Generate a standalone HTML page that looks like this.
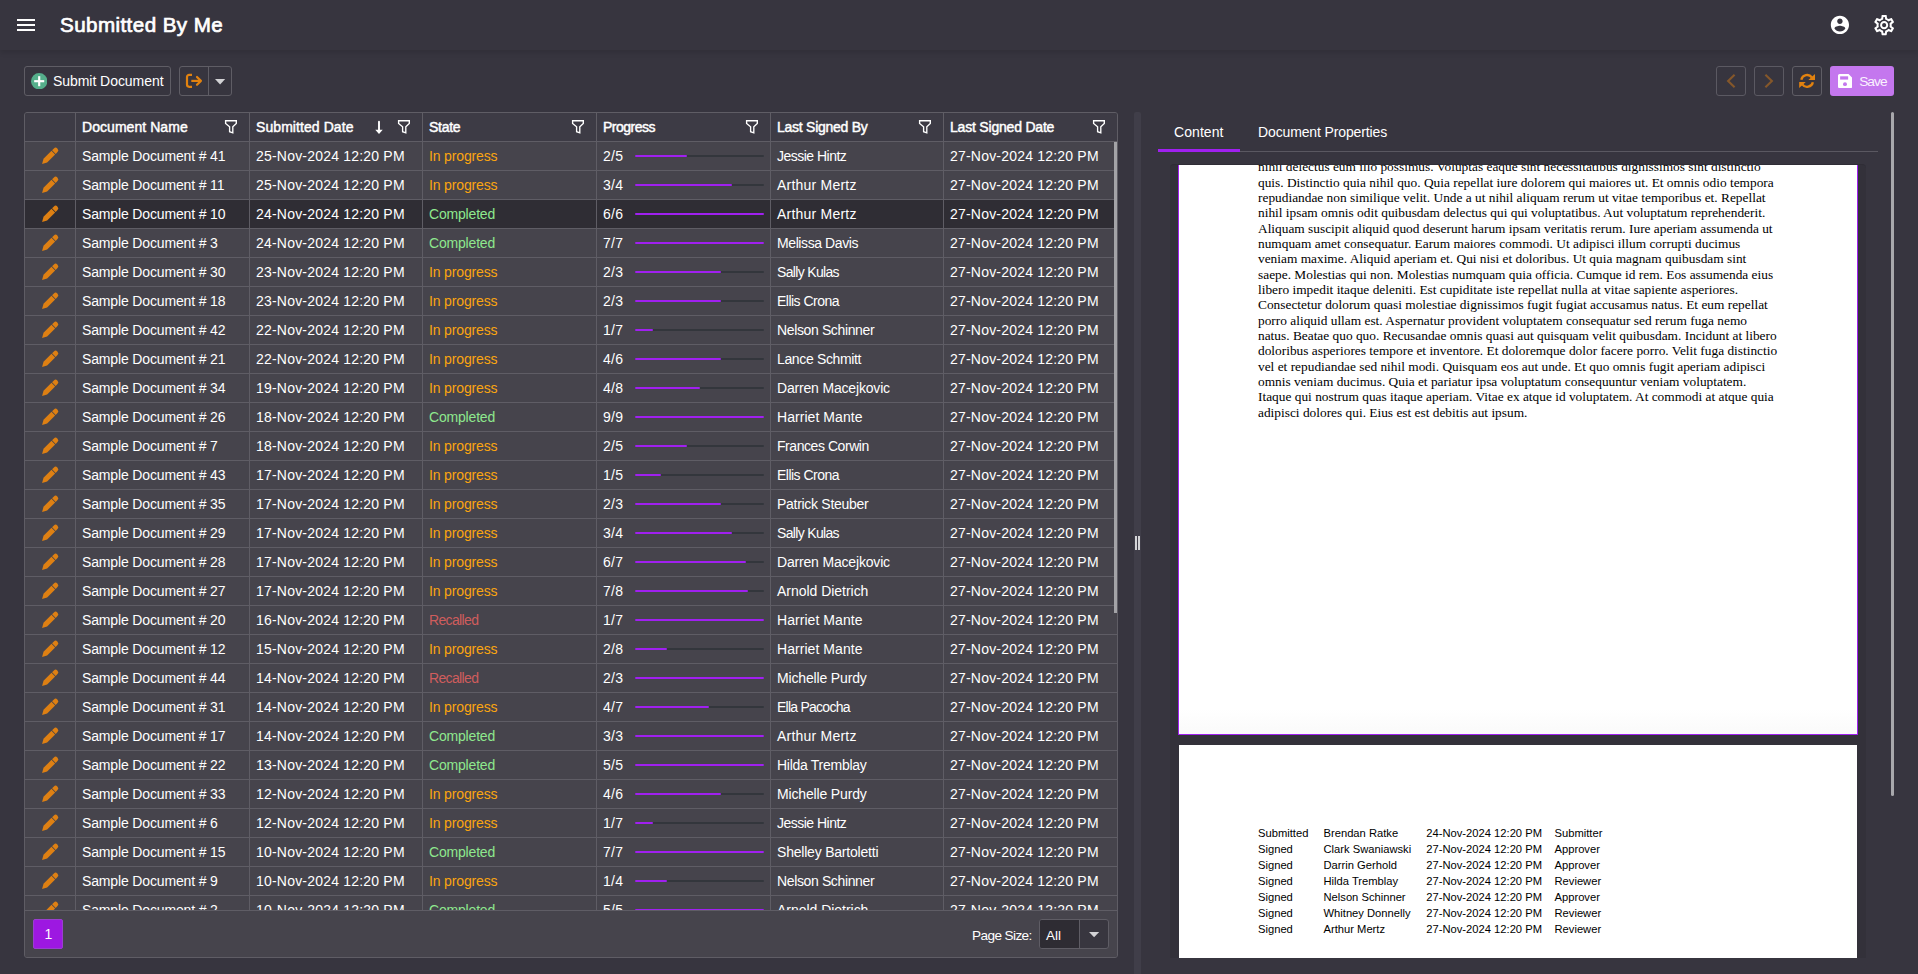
<!DOCTYPE html>
<html lang="en"><head><meta charset="utf-8"><title>Submitted By Me</title>
<style>
*{box-sizing:border-box;margin:0;padding:0}
html,body{width:1918px;height:974px;overflow:hidden;background:#37353f}
body{font-family:"Liberation Sans",sans-serif;font-size:14px;color:#fff;position:relative}
.abs{position:absolute}
#hdr{left:0;top:0;width:1918px;height:50px;background:#37353f;box-shadow:0 3px 5px rgba(0,0,0,.11)}
#title{left:60px;top:12px;font-size:20.6px;font-weight:normal;-webkit-text-stroke:.7px #fff;letter-spacing:.42px;line-height:26.6px;white-space:nowrap}
.btn{border:1px solid #5f5d65;border-radius:3px;height:30px;top:66px}
.btn.dis{border-color:#5b5962}
#grid{left:24px;top:112px;width:1094px;height:846px;border:1px solid #5f5d65;border-radius:3px 3px 3px 3px;background:#46444c;overflow:hidden}
#ghead{left:0;top:0;width:1092px;height:28px;background:#3d3b45}
#gbody{left:0;top:28px;width:1092px;height:769px;overflow:hidden}
.r{position:absolute;left:0;width:1092px;height:29px;border-top:1px solid #5f5d65}
.r.sel{background:#2f2d34}
.c{position:absolute;top:0;height:28px;line-height:29.2px;white-space:nowrap;padding-left:6px;border-left:1px solid #5f5d65;overflow:hidden}
.c0{left:0;width:50px;border-left:0}
.c1{left:50px;width:174px}
.c2{left:224px;width:173px}
.c3{left:397px;width:174px}
.c4{left:571px;width:174px}
.c5{left:745px;width:173px}
.c6{left:918px;width:174px}
.h{position:absolute;top:0;height:28px;line-height:29.2px;font-size:14px;font-weight:normal;-webkit-text-stroke:.45px #fff;white-space:nowrap;padding-left:6px;border-left:1px solid #5f5d65}
.h.c0{border-left:0}
.ip{color:#fba510;letter-spacing:-.15px}.cp{color:#8ee88e;letter-spacing:-.18px}.rc{color:#cf5d5d;letter-spacing:-.65px}
.pen{position:absolute;left:15px;top:4px}
.flt{position:absolute;right:10.6px;top:6px}
.srt{position:absolute;right:38.5px;top:6.5px}
.trk{position:absolute;left:38px;top:13px;width:129px;height:2px;border-radius:1px;background:#33363c}
.bar{position:absolute;left:0;top:0;height:2px;border-radius:1px;background:#a020f0}
.nm{letter-spacing:-.15px}.dt{letter-spacing:.2px}.who{letter-spacing:-.2px}.pg{letter-spacing:.3px}
#pager{left:0;top:797px;width:1092px;height:47px;border-top:1px solid #5f5d65;background:#46444c}
</style></head><body>

<div id="hdr" class="abs">
<svg class="abs" style="left:17px;top:19px" width="18" height="12" viewBox="0 0 18 12"><rect x="0" y="0" width="18" height="2" fill="#fff"/><rect x="0" y="5" width="18" height="2" fill="#fff"/><rect x="0" y="10" width="18" height="2" fill="#fff"/></svg>
<div id="title" class="abs">Submitted By Me</div>
<svg class="abs" style="left:1829.1px;top:14px" width="21.84" height="21.84" viewBox="0 0 24 24"><path fill="#fff" d="M12 2C6.48 2 2 6.48 2 12s4.48 10 10 10 10-4.48 10-10S17.52 2 12 2zm0 3c1.66 0 3 1.34 3 3s-1.34 3-3 3-3-1.34-3-3 1.34-3 3-3zm0 14.200000000000001c-2.5 0-4.71-1.28-6-3.22.03-1.99 4-3.08 6-3.08 1.99 0 5.970000000000001 1.09 6 3.08-1.29 1.94-3.5 3.22-6 3.22z"/></svg>
<svg class="abs" style="left:1871.7px;top:12.8px" width="24.3" height="24.3" viewBox="0 0 24 24"><path fill="#fff" d="M19.43 12.98c.04-.32.07-.64.07-.98 0-.34-.03-.66-.07-.98l2.11-1.65c.19-.15.24-.42.12-.64l-2-3.46c-.09-.16-.26-.25-.44-.25-.06 0-.12.01-.17.03l-2.49 1c-.52-.4-1.08-.73-1.69-.98l-.38-2.65C14.460000000000001 2.18 14.25 2 14 2h-4c-.25 0-.46.18-.49.42l-.38 2.65c-.61.25-1.17.59-1.69.98l-2.49-1c-.06-.02-.12-.03-.18-.03-.17 0-.34.09-.43.25l-2 3.46c-.13.22-.07.49.12.64l2.11 1.65c-.04.32-.07.65-.07.98 0 .33.03.66.07.98l-2.11 1.65c-.19.15-.24.42-.12.64l2 3.46c.09.16.26.25.44.25.06 0 .12-.01.17-.03l2.49-1c.52.4 1.08.73 1.69.98l.38 2.65c.03.24.24.42.49.42h4c.25 0 .46-.18.49-.42l.38-2.65c.61-.25 1.17-.59 1.69-.98l2.49 1c.06.02.12.03.18.03.17 0 .34-.09.43-.25l2-3.46c.12-.22.07-.49-.12-.64l-2.11-1.65zm-1.98-1.71c.04.31.05.52.05.73 0 .21-.02.43-.05.73l-.14 1.13.89.7 1.08.84-.7 1.21-1.27-.51-1.04-.42-.9.68c-.43.32-.84.56-1.25.73l-1.06.43-.16 1.13-.2 1.35h-1.4l-.19-1.35-.16-1.13-1.06-.43c-.43-.18-.83-.41-1.23-.71l-.91-.7-1.06.43-1.27.51-.7-1.21 1.08-.84.89-.7-.14-1.13c-.03-.31-.05-.54-.05-.74s.02-.43.05-.73l.14-1.13-.89-.7-1.08-.84.7-1.21 1.27.51 1.04.42.9-.68c.43-.32.84-.56 1.25-.73l1.06-.43.16-1.13.2-1.35h1.39l.19 1.35.16 1.13 1.06.43c.43.18.83.41 1.23.71l.91.7 1.06-.43 1.27-.51.7 1.21-1.07.85-.89.7.14 1.13zM12 8c-2.21 0-4 1.79-4 4s1.79 4 4 4 4-1.79 4-4-1.79-4-4-4zm0 6c-1.1 0-2-.9-2-2s.9-2 2-2 2 .9 2 2-.9 2-2 2z"/></svg>
</div>
<div class="abs btn" style="left:24px;width:147px"><svg class="abs" style="left:6px;top:6px" width="16.4" height="16.4" viewBox="0 0 16 16"><circle cx="8" cy="8" r="8" fill="#55ae8b"/><rect x="3.1" y="6.95" width="9.8" height="2.1" fill="#fff"/><rect x="6.95" y="3.1" width="2.1" height="9.8" fill="#fff"/></svg><span class="abs" style="left:28px;top:0;line-height:28px;white-space:nowrap;letter-spacing:-.05px">Submit Document</span></div>
<div class="abs btn" style="left:179px;width:53px"><div class="abs" style="left:28px;top:0;width:1px;height:28px;background:#5f5d65"></div><svg class="abs" style="left:5px;top:6px" width="20" height="16" viewBox="0 0 20 16"><path d="M7 1.8 H4.2 A2.2 2.2 0 0 0 2 4 V11.6 A2.2 2.2 0 0 0 4.2 13.8 H7" fill="none" stroke="#e2820f" stroke-width="2.2"/><path d="M6.3 7.9 H15.5" fill="none" stroke="#e2820f" stroke-width="2.2"/><path d="M12 4 L15.9 7.9 L12 11.8" fill="none" stroke="#e2820f" stroke-width="2.2" stroke-linecap="round" stroke-linejoin="round"/></svg><svg class="abs" style="left:34.8px;top:11.8px" width="11" height="6" viewBox="0 0 11 6"><path d="M0 0 H10.2 L5.1 5.4 Z" fill="#d2d2d5"/></svg></div>
<div class="abs btn dis" style="left:1716px;width:30px"><svg class="abs" style="left:8px;top:6px" width="12" height="16" viewBox="0 0 12 16"><path d="M9.6 1.7 L3.1 8 L9.6 14.3" fill="none" stroke="#85572a" stroke-width="2.1"/></svg></div>
<div class="abs btn dis" style="left:1754px;width:30px"><svg class="abs" style="left:8px;top:6px" width="12" height="16" viewBox="0 0 12 16"><path d="M2.4 1.7 L8.9 8 L2.4 14.3" fill="none" stroke="#85572a" stroke-width="2.1"/></svg></div>
<div class="abs btn" style="left:1792px;width:30px"><svg class="abs" style="left:5px;top:5px" width="18" height="18" viewBox="0 0 18 18"><g fill="none" stroke="#e2820f" stroke-width="2.35"><path d="M3.29 7.7 A5.95 5.95 0 0 1 13.9 5.5"/><path d="M14.87 10.2 A5.95 5.95 0 0 1 4.26 12.4"/></g><path d="M17 1.9 V7.9 H10.4 Z" fill="#e2820f"/><path d="M1.16 16 V10 H7.76 Z" fill="#e2820f"/></svg></div>
<div class="abs" style="left:1830px;top:66px;width:64px;height:30px;border-radius:3px;background:#c477ee"><svg class="abs" style="left:8px;top:8px" width="14.2" height="14.2" viewBox="0 0 14 14"><path d="M1.6 0 H10.4 L14 3.6 V12.4 A1.6 1.6 0 0 1 12.4 14 H1.6 A1.6 1.6 0 0 1 0 12.4 V1.6 A1.6 1.6 0 0 1 1.6 0 Z" fill="#fff"/><rect x="2.1" y="2.3" width="7.9" height="3.2" fill="#c477ee"/><circle cx="6.9" cy="10" r="1.95" fill="#c477ee"/></svg><span class="abs" style="left:29.2px;top:0;line-height:32.6px;font-size:13.7px;letter-spacing:-.95px;white-space:nowrap;color:#faf2fe">Save</span></div>
<div id="grid" class="abs">
<div id="ghead" class="abs">
<div class="h c c0"></div>
<div class="h c c1" style="letter-spacing:0.052px">Document Name<svg class="flt" width="14" height="16" viewBox="0 0 14 16"><path d="M1.6 1.7 H12.3 V4.4 L8.8 7.8 V13.9 L5.6 12.7 V7.8 L1.6 4.4 Z" fill="none" stroke="#fff" stroke-width="1.35" stroke-linejoin="miter"/></svg></div>
<div class="h c c2" style="letter-spacing:0.074px">Submitted Date<svg class="srt" width="10" height="16" viewBox="0 0 10 16"><path d="M5 1.8 V11" stroke="#fff" stroke-width="1.9" stroke-linecap="round" fill="none"/><path d="M1.3 9.7 H8.7 L5 14 Z" fill="#fff"/></svg><svg class="flt" width="14" height="16" viewBox="0 0 14 16"><path d="M1.6 1.7 H12.3 V4.4 L8.8 7.8 V13.9 L5.6 12.7 V7.8 L1.6 4.4 Z" fill="none" stroke="#fff" stroke-width="1.35" stroke-linejoin="miter"/></svg></div>
<div class="h c c3" style="letter-spacing:-0.29px">State<svg class="flt" width="14" height="16" viewBox="0 0 14 16"><path d="M1.6 1.7 H12.3 V4.4 L8.8 7.8 V13.9 L5.6 12.7 V7.8 L1.6 4.4 Z" fill="none" stroke="#fff" stroke-width="1.35" stroke-linejoin="miter"/></svg></div>
<div class="h c c4" style="letter-spacing:-0.498px">Progress<svg class="flt" width="14" height="16" viewBox="0 0 14 16"><path d="M1.6 1.7 H12.3 V4.4 L8.8 7.8 V13.9 L5.6 12.7 V7.8 L1.6 4.4 Z" fill="none" stroke="#fff" stroke-width="1.35" stroke-linejoin="miter"/></svg></div>
<div class="h c c5" style="letter-spacing:-0.257px">Last Signed By<svg class="flt" width="14" height="16" viewBox="0 0 14 16"><path d="M1.6 1.7 H12.3 V4.4 L8.8 7.8 V13.9 L5.6 12.7 V7.8 L1.6 4.4 Z" fill="none" stroke="#fff" stroke-width="1.35" stroke-linejoin="miter"/></svg></div>
<div class="h c c6" style="letter-spacing:-0.2px">Last Signed Date<svg class="flt" width="14" height="16" viewBox="0 0 14 16"><path d="M1.6 1.7 H12.3 V4.4 L8.8 7.8 V13.9 L5.6 12.7 V7.8 L1.6 4.4 Z" fill="none" stroke="#fff" stroke-width="1.35" stroke-linejoin="miter"/></svg></div>
</div>
<div id="gbody" class="abs">
<div class="r" style="top:0px"><div class="c c0"><svg class="pen" width="20" height="20" viewBox="-10 -10 20 20"><g transform="rotate(-45)" fill="#de8013"><path d="M-11.2 0 L-6.6 -2.55 H4.7 V2.55 H-6.6 Z"/><path d="M5.5 -2.55 H8.1 A2.4 2.4 0 0 1 10.5 -0.15 V0.15 A2.4 2.4 0 0 1 8.1 2.55 H5.5 Z"/></g></svg></div><div class="c c1 nm">Sample Document # 41</div><div class="c c2 dt">25-Nov-2024 12:20 PM</div><div class="c c3 ip">In progress</div><div class="c c4"><span class="pg">2/5</span><div class="trk"><div class="bar" style="width:51.6px"></div></div></div><div class="c c5" style="letter-spacing:-0.51px">Jessie Hintz</div><div class="c c6 dt">27-Nov-2024 12:20 PM</div></div>
<div class="r" style="top:29px"><div class="c c0"><svg class="pen" width="20" height="20" viewBox="-10 -10 20 20"><g transform="rotate(-45)" fill="#de8013"><path d="M-11.2 0 L-6.6 -2.55 H4.7 V2.55 H-6.6 Z"/><path d="M5.5 -2.55 H8.1 A2.4 2.4 0 0 1 10.5 -0.15 V0.15 A2.4 2.4 0 0 1 8.1 2.55 H5.5 Z"/></g></svg></div><div class="c c1 nm">Sample Document # 11</div><div class="c c2 dt">25-Nov-2024 12:20 PM</div><div class="c c3 ip">In progress</div><div class="c c4"><span class="pg">3/4</span><div class="trk"><div class="bar" style="width:96.8px"></div></div></div><div class="c c5" style="letter-spacing:0.225px">Arthur Mertz</div><div class="c c6 dt">27-Nov-2024 12:20 PM</div></div>
<div class="r sel" style="top:58px"><div class="c c0"><svg class="pen" width="20" height="20" viewBox="-10 -10 20 20"><g transform="rotate(-45)" fill="#de8013"><path d="M-11.2 0 L-6.6 -2.55 H4.7 V2.55 H-6.6 Z"/><path d="M5.5 -2.55 H8.1 A2.4 2.4 0 0 1 10.5 -0.15 V0.15 A2.4 2.4 0 0 1 8.1 2.55 H5.5 Z"/></g></svg></div><div class="c c1 nm">Sample Document # 10</div><div class="c c2 dt">24-Nov-2024 12:20 PM</div><div class="c c3 cp">Completed</div><div class="c c4"><span class="pg">6/6</span><div class="trk"><div class="bar" style="width:129.0px"></div></div></div><div class="c c5" style="letter-spacing:0.225px">Arthur Mertz</div><div class="c c6 dt">27-Nov-2024 12:20 PM</div></div>
<div class="r" style="top:87px"><div class="c c0"><svg class="pen" width="20" height="20" viewBox="-10 -10 20 20"><g transform="rotate(-45)" fill="#de8013"><path d="M-11.2 0 L-6.6 -2.55 H4.7 V2.55 H-6.6 Z"/><path d="M5.5 -2.55 H8.1 A2.4 2.4 0 0 1 10.5 -0.15 V0.15 A2.4 2.4 0 0 1 8.1 2.55 H5.5 Z"/></g></svg></div><div class="c c1 nm">Sample Document # 3</div><div class="c c2 dt">24-Nov-2024 12:20 PM</div><div class="c c3 cp">Completed</div><div class="c c4"><span class="pg">7/7</span><div class="trk"><div class="bar" style="width:129.0px"></div></div></div><div class="c c5" style="letter-spacing:-0.405px">Melissa Davis</div><div class="c c6 dt">27-Nov-2024 12:20 PM</div></div>
<div class="r" style="top:116px"><div class="c c0"><svg class="pen" width="20" height="20" viewBox="-10 -10 20 20"><g transform="rotate(-45)" fill="#de8013"><path d="M-11.2 0 L-6.6 -2.55 H4.7 V2.55 H-6.6 Z"/><path d="M5.5 -2.55 H8.1 A2.4 2.4 0 0 1 10.5 -0.15 V0.15 A2.4 2.4 0 0 1 8.1 2.55 H5.5 Z"/></g></svg></div><div class="c c1 nm">Sample Document # 30</div><div class="c c2 dt">23-Nov-2024 12:20 PM</div><div class="c c3 ip">In progress</div><div class="c c4"><span class="pg">2/3</span><div class="trk"><div class="bar" style="width:86.0px"></div></div></div><div class="c c5" style="letter-spacing:-0.663px">Sally Kulas</div><div class="c c6 dt">27-Nov-2024 12:20 PM</div></div>
<div class="r" style="top:145px"><div class="c c0"><svg class="pen" width="20" height="20" viewBox="-10 -10 20 20"><g transform="rotate(-45)" fill="#de8013"><path d="M-11.2 0 L-6.6 -2.55 H4.7 V2.55 H-6.6 Z"/><path d="M5.5 -2.55 H8.1 A2.4 2.4 0 0 1 10.5 -0.15 V0.15 A2.4 2.4 0 0 1 8.1 2.55 H5.5 Z"/></g></svg></div><div class="c c1 nm">Sample Document # 18</div><div class="c c2 dt">23-Nov-2024 12:20 PM</div><div class="c c3 ip">In progress</div><div class="c c4"><span class="pg">2/3</span><div class="trk"><div class="bar" style="width:86.0px"></div></div></div><div class="c c5" style="letter-spacing:-0.515px">Ellis Crona</div><div class="c c6 dt">27-Nov-2024 12:20 PM</div></div>
<div class="r" style="top:174px"><div class="c c0"><svg class="pen" width="20" height="20" viewBox="-10 -10 20 20"><g transform="rotate(-45)" fill="#de8013"><path d="M-11.2 0 L-6.6 -2.55 H4.7 V2.55 H-6.6 Z"/><path d="M5.5 -2.55 H8.1 A2.4 2.4 0 0 1 10.5 -0.15 V0.15 A2.4 2.4 0 0 1 8.1 2.55 H5.5 Z"/></g></svg></div><div class="c c1 nm">Sample Document # 42</div><div class="c c2 dt">22-Nov-2024 12:20 PM</div><div class="c c3 ip">In progress</div><div class="c c4"><span class="pg">1/7</span><div class="trk"><div class="bar" style="width:18.4px"></div></div></div><div class="c c5" style="letter-spacing:-0.368px">Nelson Schinner</div><div class="c c6 dt">27-Nov-2024 12:20 PM</div></div>
<div class="r" style="top:203px"><div class="c c0"><svg class="pen" width="20" height="20" viewBox="-10 -10 20 20"><g transform="rotate(-45)" fill="#de8013"><path d="M-11.2 0 L-6.6 -2.55 H4.7 V2.55 H-6.6 Z"/><path d="M5.5 -2.55 H8.1 A2.4 2.4 0 0 1 10.5 -0.15 V0.15 A2.4 2.4 0 0 1 8.1 2.55 H5.5 Z"/></g></svg></div><div class="c c1 nm">Sample Document # 21</div><div class="c c2 dt">22-Nov-2024 12:20 PM</div><div class="c c3 ip">In progress</div><div class="c c4"><span class="pg">4/6</span><div class="trk"><div class="bar" style="width:86.0px"></div></div></div><div class="c c5" style="letter-spacing:-0.354px">Lance Schmitt</div><div class="c c6 dt">27-Nov-2024 12:20 PM</div></div>
<div class="r" style="top:232px"><div class="c c0"><svg class="pen" width="20" height="20" viewBox="-10 -10 20 20"><g transform="rotate(-45)" fill="#de8013"><path d="M-11.2 0 L-6.6 -2.55 H4.7 V2.55 H-6.6 Z"/><path d="M5.5 -2.55 H8.1 A2.4 2.4 0 0 1 10.5 -0.15 V0.15 A2.4 2.4 0 0 1 8.1 2.55 H5.5 Z"/></g></svg></div><div class="c c1 nm">Sample Document # 34</div><div class="c c2 dt">19-Nov-2024 12:20 PM</div><div class="c c3 ip">In progress</div><div class="c c4"><span class="pg">4/8</span><div class="trk"><div class="bar" style="width:64.5px"></div></div></div><div class="c c5" style="letter-spacing:-0.178px">Darren Macejkovic</div><div class="c c6 dt">27-Nov-2024 12:20 PM</div></div>
<div class="r" style="top:261px"><div class="c c0"><svg class="pen" width="20" height="20" viewBox="-10 -10 20 20"><g transform="rotate(-45)" fill="#de8013"><path d="M-11.2 0 L-6.6 -2.55 H4.7 V2.55 H-6.6 Z"/><path d="M5.5 -2.55 H8.1 A2.4 2.4 0 0 1 10.5 -0.15 V0.15 A2.4 2.4 0 0 1 8.1 2.55 H5.5 Z"/></g></svg></div><div class="c c1 nm">Sample Document # 26</div><div class="c c2 dt">18-Nov-2024 12:20 PM</div><div class="c c3 cp">Completed</div><div class="c c4"><span class="pg">9/9</span><div class="trk"><div class="bar" style="width:129.0px"></div></div></div><div class="c c5" style="letter-spacing:0.055px">Harriet Mante</div><div class="c c6 dt">27-Nov-2024 12:20 PM</div></div>
<div class="r" style="top:290px"><div class="c c0"><svg class="pen" width="20" height="20" viewBox="-10 -10 20 20"><g transform="rotate(-45)" fill="#de8013"><path d="M-11.2 0 L-6.6 -2.55 H4.7 V2.55 H-6.6 Z"/><path d="M5.5 -2.55 H8.1 A2.4 2.4 0 0 1 10.5 -0.15 V0.15 A2.4 2.4 0 0 1 8.1 2.55 H5.5 Z"/></g></svg></div><div class="c c1 nm">Sample Document # 7</div><div class="c c2 dt">18-Nov-2024 12:20 PM</div><div class="c c3 ip">In progress</div><div class="c c4"><span class="pg">2/5</span><div class="trk"><div class="bar" style="width:51.6px"></div></div></div><div class="c c5" style="letter-spacing:-0.439px">Frances Corwin</div><div class="c c6 dt">27-Nov-2024 12:20 PM</div></div>
<div class="r" style="top:319px"><div class="c c0"><svg class="pen" width="20" height="20" viewBox="-10 -10 20 20"><g transform="rotate(-45)" fill="#de8013"><path d="M-11.2 0 L-6.6 -2.55 H4.7 V2.55 H-6.6 Z"/><path d="M5.5 -2.55 H8.1 A2.4 2.4 0 0 1 10.5 -0.15 V0.15 A2.4 2.4 0 0 1 8.1 2.55 H5.5 Z"/></g></svg></div><div class="c c1 nm">Sample Document # 43</div><div class="c c2 dt">17-Nov-2024 12:20 PM</div><div class="c c3 ip">In progress</div><div class="c c4"><span class="pg">1/5</span><div class="trk"><div class="bar" style="width:25.8px"></div></div></div><div class="c c5" style="letter-spacing:-0.515px">Ellis Crona</div><div class="c c6 dt">27-Nov-2024 12:20 PM</div></div>
<div class="r" style="top:348px"><div class="c c0"><svg class="pen" width="20" height="20" viewBox="-10 -10 20 20"><g transform="rotate(-45)" fill="#de8013"><path d="M-11.2 0 L-6.6 -2.55 H4.7 V2.55 H-6.6 Z"/><path d="M5.5 -2.55 H8.1 A2.4 2.4 0 0 1 10.5 -0.15 V0.15 A2.4 2.4 0 0 1 8.1 2.55 H5.5 Z"/></g></svg></div><div class="c c1 nm">Sample Document # 35</div><div class="c c2 dt">17-Nov-2024 12:20 PM</div><div class="c c3 ip">In progress</div><div class="c c4"><span class="pg">2/3</span><div class="trk"><div class="bar" style="width:86.0px"></div></div></div><div class="c c5" style="letter-spacing:-0.291px">Patrick Steuber</div><div class="c c6 dt">27-Nov-2024 12:20 PM</div></div>
<div class="r" style="top:377px"><div class="c c0"><svg class="pen" width="20" height="20" viewBox="-10 -10 20 20"><g transform="rotate(-45)" fill="#de8013"><path d="M-11.2 0 L-6.6 -2.55 H4.7 V2.55 H-6.6 Z"/><path d="M5.5 -2.55 H8.1 A2.4 2.4 0 0 1 10.5 -0.15 V0.15 A2.4 2.4 0 0 1 8.1 2.55 H5.5 Z"/></g></svg></div><div class="c c1 nm">Sample Document # 29</div><div class="c c2 dt">17-Nov-2024 12:20 PM</div><div class="c c3 ip">In progress</div><div class="c c4"><span class="pg">3/4</span><div class="trk"><div class="bar" style="width:96.8px"></div></div></div><div class="c c5" style="letter-spacing:-0.663px">Sally Kulas</div><div class="c c6 dt">27-Nov-2024 12:20 PM</div></div>
<div class="r" style="top:406px"><div class="c c0"><svg class="pen" width="20" height="20" viewBox="-10 -10 20 20"><g transform="rotate(-45)" fill="#de8013"><path d="M-11.2 0 L-6.6 -2.55 H4.7 V2.55 H-6.6 Z"/><path d="M5.5 -2.55 H8.1 A2.4 2.4 0 0 1 10.5 -0.15 V0.15 A2.4 2.4 0 0 1 8.1 2.55 H5.5 Z"/></g></svg></div><div class="c c1 nm">Sample Document # 28</div><div class="c c2 dt">17-Nov-2024 12:20 PM</div><div class="c c3 ip">In progress</div><div class="c c4"><span class="pg">6/7</span><div class="trk"><div class="bar" style="width:110.6px"></div></div></div><div class="c c5" style="letter-spacing:-0.178px">Darren Macejkovic</div><div class="c c6 dt">27-Nov-2024 12:20 PM</div></div>
<div class="r" style="top:435px"><div class="c c0"><svg class="pen" width="20" height="20" viewBox="-10 -10 20 20"><g transform="rotate(-45)" fill="#de8013"><path d="M-11.2 0 L-6.6 -2.55 H4.7 V2.55 H-6.6 Z"/><path d="M5.5 -2.55 H8.1 A2.4 2.4 0 0 1 10.5 -0.15 V0.15 A2.4 2.4 0 0 1 8.1 2.55 H5.5 Z"/></g></svg></div><div class="c c1 nm">Sample Document # 27</div><div class="c c2 dt">17-Nov-2024 12:20 PM</div><div class="c c3 ip">In progress</div><div class="c c4"><span class="pg">7/8</span><div class="trk"><div class="bar" style="width:112.9px"></div></div></div><div class="c c5" style="letter-spacing:-0.03px">Arnold Dietrich</div><div class="c c6 dt">27-Nov-2024 12:20 PM</div></div>
<div class="r" style="top:464px"><div class="c c0"><svg class="pen" width="20" height="20" viewBox="-10 -10 20 20"><g transform="rotate(-45)" fill="#de8013"><path d="M-11.2 0 L-6.6 -2.55 H4.7 V2.55 H-6.6 Z"/><path d="M5.5 -2.55 H8.1 A2.4 2.4 0 0 1 10.5 -0.15 V0.15 A2.4 2.4 0 0 1 8.1 2.55 H5.5 Z"/></g></svg></div><div class="c c1 nm">Sample Document # 20</div><div class="c c2 dt">16-Nov-2024 12:20 PM</div><div class="c c3 rc">Recalled</div><div class="c c4"><span class="pg">1/7</span><div class="trk"><div class="bar" style="width:129.0px"></div></div></div><div class="c c5" style="letter-spacing:0.055px">Harriet Mante</div><div class="c c6 dt">27-Nov-2024 12:20 PM</div></div>
<div class="r" style="top:493px"><div class="c c0"><svg class="pen" width="20" height="20" viewBox="-10 -10 20 20"><g transform="rotate(-45)" fill="#de8013"><path d="M-11.2 0 L-6.6 -2.55 H4.7 V2.55 H-6.6 Z"/><path d="M5.5 -2.55 H8.1 A2.4 2.4 0 0 1 10.5 -0.15 V0.15 A2.4 2.4 0 0 1 8.1 2.55 H5.5 Z"/></g></svg></div><div class="c c1 nm">Sample Document # 12</div><div class="c c2 dt">15-Nov-2024 12:20 PM</div><div class="c c3 ip">In progress</div><div class="c c4"><span class="pg">2/8</span><div class="trk"><div class="bar" style="width:32.2px"></div></div></div><div class="c c5" style="letter-spacing:0.055px">Harriet Mante</div><div class="c c6 dt">27-Nov-2024 12:20 PM</div></div>
<div class="r" style="top:522px"><div class="c c0"><svg class="pen" width="20" height="20" viewBox="-10 -10 20 20"><g transform="rotate(-45)" fill="#de8013"><path d="M-11.2 0 L-6.6 -2.55 H4.7 V2.55 H-6.6 Z"/><path d="M5.5 -2.55 H8.1 A2.4 2.4 0 0 1 10.5 -0.15 V0.15 A2.4 2.4 0 0 1 8.1 2.55 H5.5 Z"/></g></svg></div><div class="c c1 nm">Sample Document # 44</div><div class="c c2 dt">14-Nov-2024 12:20 PM</div><div class="c c3 rc">Recalled</div><div class="c c4"><span class="pg">2/3</span><div class="trk"><div class="bar" style="width:129.0px"></div></div></div><div class="c c5" style="letter-spacing:-0.158px">Michelle Purdy</div><div class="c c6 dt">27-Nov-2024 12:20 PM</div></div>
<div class="r" style="top:551px"><div class="c c0"><svg class="pen" width="20" height="20" viewBox="-10 -10 20 20"><g transform="rotate(-45)" fill="#de8013"><path d="M-11.2 0 L-6.6 -2.55 H4.7 V2.55 H-6.6 Z"/><path d="M5.5 -2.55 H8.1 A2.4 2.4 0 0 1 10.5 -0.15 V0.15 A2.4 2.4 0 0 1 8.1 2.55 H5.5 Z"/></g></svg></div><div class="c c1 nm">Sample Document # 31</div><div class="c c2 dt">14-Nov-2024 12:20 PM</div><div class="c c3 ip">In progress</div><div class="c c4"><span class="pg">4/7</span><div class="trk"><div class="bar" style="width:73.7px"></div></div></div><div class="c c5" style="letter-spacing:-0.749px">Ella Pacocha</div><div class="c c6 dt">27-Nov-2024 12:20 PM</div></div>
<div class="r" style="top:580px"><div class="c c0"><svg class="pen" width="20" height="20" viewBox="-10 -10 20 20"><g transform="rotate(-45)" fill="#de8013"><path d="M-11.2 0 L-6.6 -2.55 H4.7 V2.55 H-6.6 Z"/><path d="M5.5 -2.55 H8.1 A2.4 2.4 0 0 1 10.5 -0.15 V0.15 A2.4 2.4 0 0 1 8.1 2.55 H5.5 Z"/></g></svg></div><div class="c c1 nm">Sample Document # 17</div><div class="c c2 dt">14-Nov-2024 12:20 PM</div><div class="c c3 cp">Completed</div><div class="c c4"><span class="pg">3/3</span><div class="trk"><div class="bar" style="width:129.0px"></div></div></div><div class="c c5" style="letter-spacing:0.225px">Arthur Mertz</div><div class="c c6 dt">27-Nov-2024 12:20 PM</div></div>
<div class="r" style="top:609px"><div class="c c0"><svg class="pen" width="20" height="20" viewBox="-10 -10 20 20"><g transform="rotate(-45)" fill="#de8013"><path d="M-11.2 0 L-6.6 -2.55 H4.7 V2.55 H-6.6 Z"/><path d="M5.5 -2.55 H8.1 A2.4 2.4 0 0 1 10.5 -0.15 V0.15 A2.4 2.4 0 0 1 8.1 2.55 H5.5 Z"/></g></svg></div><div class="c c1 nm">Sample Document # 22</div><div class="c c2 dt">13-Nov-2024 12:20 PM</div><div class="c c3 cp">Completed</div><div class="c c4"><span class="pg">5/5</span><div class="trk"><div class="bar" style="width:129.0px"></div></div></div><div class="c c5" style="letter-spacing:-0.28px">Hilda Tremblay</div><div class="c c6 dt">27-Nov-2024 12:20 PM</div></div>
<div class="r" style="top:638px"><div class="c c0"><svg class="pen" width="20" height="20" viewBox="-10 -10 20 20"><g transform="rotate(-45)" fill="#de8013"><path d="M-11.2 0 L-6.6 -2.55 H4.7 V2.55 H-6.6 Z"/><path d="M5.5 -2.55 H8.1 A2.4 2.4 0 0 1 10.5 -0.15 V0.15 A2.4 2.4 0 0 1 8.1 2.55 H5.5 Z"/></g></svg></div><div class="c c1 nm">Sample Document # 33</div><div class="c c2 dt">12-Nov-2024 12:20 PM</div><div class="c c3 ip">In progress</div><div class="c c4"><span class="pg">4/6</span><div class="trk"><div class="bar" style="width:86.0px"></div></div></div><div class="c c5" style="letter-spacing:-0.158px">Michelle Purdy</div><div class="c c6 dt">27-Nov-2024 12:20 PM</div></div>
<div class="r" style="top:667px"><div class="c c0"><svg class="pen" width="20" height="20" viewBox="-10 -10 20 20"><g transform="rotate(-45)" fill="#de8013"><path d="M-11.2 0 L-6.6 -2.55 H4.7 V2.55 H-6.6 Z"/><path d="M5.5 -2.55 H8.1 A2.4 2.4 0 0 1 10.5 -0.15 V0.15 A2.4 2.4 0 0 1 8.1 2.55 H5.5 Z"/></g></svg></div><div class="c c1 nm">Sample Document # 6</div><div class="c c2 dt">12-Nov-2024 12:20 PM</div><div class="c c3 ip">In progress</div><div class="c c4"><span class="pg">1/7</span><div class="trk"><div class="bar" style="width:18.4px"></div></div></div><div class="c c5" style="letter-spacing:-0.51px">Jessie Hintz</div><div class="c c6 dt">27-Nov-2024 12:20 PM</div></div>
<div class="r" style="top:696px"><div class="c c0"><svg class="pen" width="20" height="20" viewBox="-10 -10 20 20"><g transform="rotate(-45)" fill="#de8013"><path d="M-11.2 0 L-6.6 -2.55 H4.7 V2.55 H-6.6 Z"/><path d="M5.5 -2.55 H8.1 A2.4 2.4 0 0 1 10.5 -0.15 V0.15 A2.4 2.4 0 0 1 8.1 2.55 H5.5 Z"/></g></svg></div><div class="c c1 nm">Sample Document # 15</div><div class="c c2 dt">10-Nov-2024 12:20 PM</div><div class="c c3 cp">Completed</div><div class="c c4"><span class="pg">7/7</span><div class="trk"><div class="bar" style="width:129.0px"></div></div></div><div class="c c5" style="letter-spacing:-0.209px">Shelley Bartoletti</div><div class="c c6 dt">27-Nov-2024 12:20 PM</div></div>
<div class="r" style="top:725px"><div class="c c0"><svg class="pen" width="20" height="20" viewBox="-10 -10 20 20"><g transform="rotate(-45)" fill="#de8013"><path d="M-11.2 0 L-6.6 -2.55 H4.7 V2.55 H-6.6 Z"/><path d="M5.5 -2.55 H8.1 A2.4 2.4 0 0 1 10.5 -0.15 V0.15 A2.4 2.4 0 0 1 8.1 2.55 H5.5 Z"/></g></svg></div><div class="c c1 nm">Sample Document # 9</div><div class="c c2 dt">10-Nov-2024 12:20 PM</div><div class="c c3 ip">In progress</div><div class="c c4"><span class="pg">1/4</span><div class="trk"><div class="bar" style="width:32.2px"></div></div></div><div class="c c5" style="letter-spacing:-0.368px">Nelson Schinner</div><div class="c c6 dt">27-Nov-2024 12:20 PM</div></div>
<div class="r" style="top:754px"><div class="c c0"><svg class="pen" width="20" height="20" viewBox="-10 -10 20 20"><g transform="rotate(-45)" fill="#de8013"><path d="M-11.2 0 L-6.6 -2.55 H4.7 V2.55 H-6.6 Z"/><path d="M5.5 -2.55 H8.1 A2.4 2.4 0 0 1 10.5 -0.15 V0.15 A2.4 2.4 0 0 1 8.1 2.55 H5.5 Z"/></g></svg></div><div class="c c1 nm">Sample Document # 2</div><div class="c c2 dt">10-Nov-2024 12:20 PM</div><div class="c c3 cp">Completed</div><div class="c c4"><span class="pg">5/5</span><div class="trk"><div class="bar" style="width:129.0px"></div></div></div><div class="c c5" style="letter-spacing:-0.03px">Arnold Dietrich</div><div class="c c6 dt">27-Nov-2024 12:20 PM</div></div>
<div class="abs" style="left:1089px;top:1px;width:3px;height:471px;background:#a3a3a7"></div>
</div>
<div id="pager" class="abs"><div class="abs" style="left:8px;top:8px;width:30px;height:30px;border-radius:2px;background:#9d18e1;border:1px solid #9a3fd0;text-align:center;line-height:29.6px;padding-left:1px;color:#fff">1</div><span class="abs" style="left:947px;top:8px;line-height:33px;white-space:nowrap;font-size:13.6px;letter-spacing:-.6px">Page Size:</span><div class="abs" style="left:1014px;top:8px;width:70px;height:30px;border:1px solid #5f5d65;border-radius:3px;overflow:hidden;background:#38363f"><div class="abs" style="left:0;top:0;width:39px;height:28px;background:#2e2c33;line-height:32px;font-size:13.5px;padding-left:6px">All</div><div class="abs" style="left:39px;top:0;width:1px;height:28px;background:#5f5d65"></div><svg class="abs" style="left:49px;top:12px" width="11" height="6" viewBox="0 0 11 6"><path d="M0 0.1 H10.2 L5.1 5.3 Z" fill="#d2d2d5"/></svg></div></div>
</div>
<div class="abs" style="left:1134px;top:112px;width:7px;height:862px;background:#403e49;border-radius:2px 2px 0 0"></div>
<div class="abs" style="left:1135px;top:536px;width:2px;height:14px;background:#d4d4d7"></div><div class="abs" style="left:1138px;top:536px;width:2px;height:14px;background:#d4d4d7"></div>
<div class="abs" style="left:1240px;top:151px;width:638px;height:1px;background:#5a5861"></div>
<div class="abs" style="left:1158px;top:149px;width:82px;height:3px;background:#a020f0"></div>
<span class="abs" style="left:1174px;top:118px;line-height:28px;white-space:nowrap;letter-spacing:.07px">Content</span>
<span class="abs" style="left:1258px;top:118px;line-height:28px;white-space:nowrap;letter-spacing:-.13px">Document Properties</span>
<div class="abs" style="left:1891px;top:112px;width:3px;height:684px;background:#a8a8ac;border-radius:2px"></div>
<div class="abs" style="left:1170px;top:164px;width:696px;height:794px;background:#33313a;border-radius:4px 4px 0 0;overflow:hidden;border-top:1px solid #2f2d36">
<div class="abs" style="left:8px;top:-11px;width:680px;height:581px;background:#fff;border:1px solid #a020f0"></div>
<div class="abs" style="left:9px;top:544px;width:678px;height:25px;background:linear-gradient(#fff,#fafafa)"></div>
<div class="abs" style="left:88px;top:-5.3px;width:540px;font-family:'Liberation Serif',serif;font-size:13.365px;line-height:15.33px;color:#000;white-space:nowrap">
<span style="position:relative;top:-1px">nihil delectus eum illo possimus. Voluptas eaque sint necessitatibus dignissimos sint distinctio</span><br>quis. Distinctio quia nihil quo. Quia repellat iure dolorem qui maiores ut. Et omnis odio tempora<br>repudiandae non similique velit. Unde a ut nihil aliquam rerum ut vitae temporibus et. Repellat<br><span style="position:relative;top:-1px">nihil ipsam omnis odit quibusdam delectus qui qui voluptatibus. Aut voluptatum reprehenderit.</span><br>Aliquam suscipit aliquid quod deserunt harum ipsam veritatis rerum. Iure aperiam assumenda ut<br>numquam amet consequatur. Earum maiores commodi. Ut adipisci illum corrupti ducimus<br><span style="position:relative;top:-1px">veniam maxime. Aliquid aperiam et. Qui nisi et doloribus. Ut quia magnam quibusdam sint</span><br>saepe. Molestias qui non. Molestias numquam quia officia. Cumque id rem. Eos assumenda eius<br>libero impedit itaque deleniti. Est cupiditate iste repellat nulla at vitae sapiente asperiores.<br><span style="position:relative;top:-1px">Consectetur dolorum quasi molestiae dignissimos fugit fugiat accusamus natus. Et eum repellat</span><br>porro aliquid ullam est. Aspernatur provident voluptatem consequatur sed rerum fuga nemo<br>natus. Beatae quo quo. Recusandae omnis quasi aut quisquam velit quibusdam. Incidunt at libero<br><span style="position:relative;top:-1px">doloribus asperiores tempore et inventore. Et doloremque dolor facere porro. Velit fuga distinctio</span><br>vel et repudiandae sed nihil modi. Quisquam eos aut unde. Et quo omnis fugit aperiam adipisci<br>omnis veniam ducimus. Quia et pariatur ipsa voluptatum consequuntur veniam voluptatem.<br><span style="position:relative;top:-1px">Itaque qui nostrum quas itaque aperiam. Vitae ex atque id voluptatem. At commodi at atque quia</span><br>adipisci dolores qui. Eius est est debitis aut ipsum.
</div>
<div class="abs" style="left:9px;top:580px;width:678px;height:300px;background:#fff"></div>
<div class="abs" style="left:0;top:661px;width:696px;color:#000;font-size:11.2px;line-height:15.95px;white-space:nowrap">
<div class="abs" style="top:0.00px;left:88px">Submitted</div><div class="abs" style="top:0.00px;left:153.5px">Brendan Ratke</div><div class="abs" style="top:0.00px;left:256.3px">24-Nov-2024 12:20 PM</div><div class="abs" style="top:0.00px;left:384.5px">Submitter</div>
<div class="abs" style="top:15.95px;left:88px">Signed</div><div class="abs" style="top:15.95px;left:153.5px">Clark Swaniawski</div><div class="abs" style="top:15.95px;left:256.3px">27-Nov-2024 12:20 PM</div><div class="abs" style="top:15.95px;left:384.5px">Approver</div>
<div class="abs" style="top:31.90px;left:88px">Signed</div><div class="abs" style="top:31.90px;left:153.5px">Darrin Gerhold</div><div class="abs" style="top:31.90px;left:256.3px">27-Nov-2024 12:20 PM</div><div class="abs" style="top:31.90px;left:384.5px">Approver</div>
<div class="abs" style="top:47.85px;left:88px">Signed</div><div class="abs" style="top:47.85px;left:153.5px">Hilda Tremblay</div><div class="abs" style="top:47.85px;left:256.3px">27-Nov-2024 12:20 PM</div><div class="abs" style="top:47.85px;left:384.5px">Reviewer</div>
<div class="abs" style="top:63.80px;left:88px">Signed</div><div class="abs" style="top:63.80px;left:153.5px">Nelson Schinner</div><div class="abs" style="top:63.80px;left:256.3px">27-Nov-2024 12:20 PM</div><div class="abs" style="top:63.80px;left:384.5px">Approver</div>
<div class="abs" style="top:79.75px;left:88px">Signed</div><div class="abs" style="top:79.75px;left:153.5px">Whitney Donnelly</div><div class="abs" style="top:79.75px;left:256.3px">27-Nov-2024 12:20 PM</div><div class="abs" style="top:79.75px;left:384.5px">Reviewer</div>
<div class="abs" style="top:95.70px;left:88px">Signed</div><div class="abs" style="top:95.70px;left:153.5px">Arthur Mertz</div><div class="abs" style="top:95.70px;left:256.3px">27-Nov-2024 12:20 PM</div><div class="abs" style="top:95.70px;left:384.5px">Reviewer</div>
</div>
</div>
</body></html>
